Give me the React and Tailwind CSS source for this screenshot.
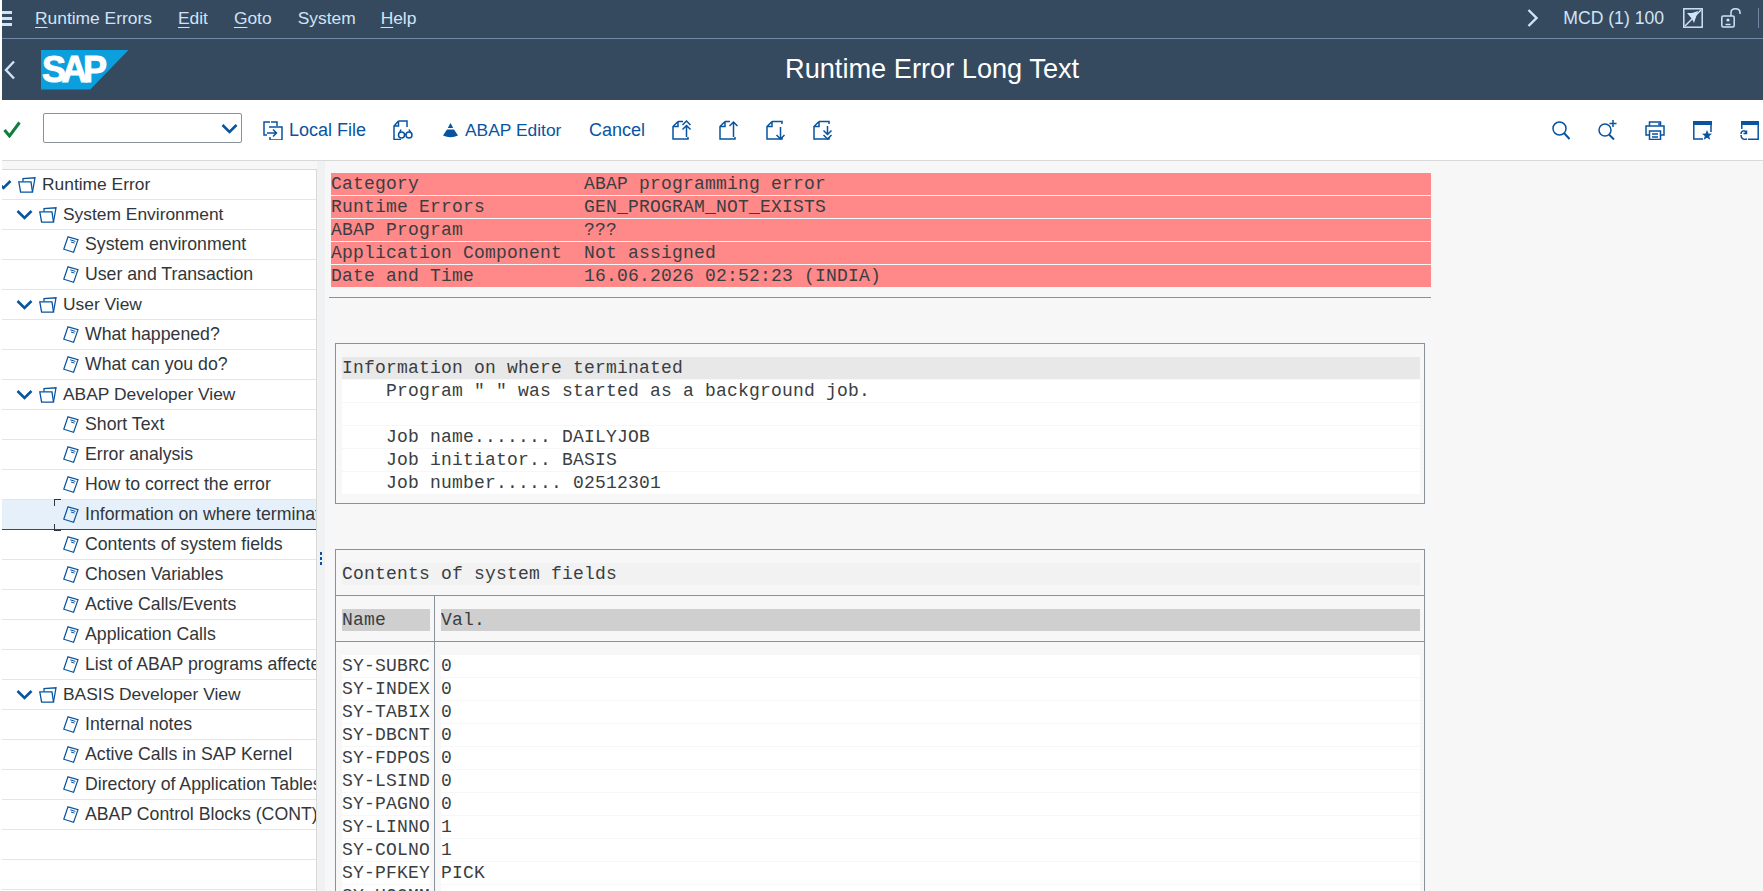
const treeRows = [
  { label: 'Runtime Error', level: 0 },
  { label: 'System Environment', level: 1 },
  { label: 'System environment', level: 2 },
  { label: 'User and Transaction', level: 2 },
  { label: 'User View', level: 1 },
  { label: 'What happened?', level: 2 },
  { label: 'What can you do?', level: 2 },
  { label: 'ABAP Developer View', level: 1 },
  { label: 'Short Text', level: 2 },
  { label: 'Error analysis', level: 2 },
  { label: 'How to correct the error', level: 2 },
  { label: 'Information on where terminated', level: 2, selected: true },
  { label: 'Contents of system fields', level: 2 },
  { label: 'Chosen Variables', level: 2 },
  { label: 'Active Calls/Events', level: 2 },
  { label: 'Application Calls', level: 2 },
  { label: 'List of ABAP programs affected', level: 2 },
  { label: 'BASIS Developer View', level: 1 },
  { label: 'Internal notes', level: 2 },
  { label: 'Active Calls in SAP Kernel', level: 2 },
  { label: 'Directory of Application Tables', level: 2 },
  { label: 'ABAP Control Blocks (CONT)', level: 2 },
];

const errorRows = [
  ['Category', 'ABAP programming error'],
  ['Runtime Errors', 'GEN_PROGRAM_NOT_EXISTS'],
  ['ABAP Program', '???'],
  ['Application Component', 'Not assigned'],
  ['Date and Time', '16.06.2026 02:52:23 (INDIA)'],
];

const infoRows = [
  '    Program " " was started as a background job.',
  '',
  '    Job name....... DAILYJOB',
  '    Job initiator.. BASIS',
  '    Job number...... 02512301',
];

const sysFields = [
  ['SY-SUBRC', '0'],
  ['SY-INDEX', '0'],
  ['SY-TABIX', '0'],
  ['SY-DBCNT', '0'],
  ['SY-FDPOS', '0'],
  ['SY-LSIND', '0'],
  ['SY-PAGNO', '0'],
  ['SY-LINNO', '1'],
  ['SY-COLNO', '1'],
  ['SY-PFKEY', 'PICK'],
  ['SY-UCOMM', ''],
];

const Icon = ({ w = 20, h = 20, color = '#0854a0', sw = 1.5, className = '', children }) => (
  <svg
    width={w}
    height={h}
    viewBox={`0 0 ${w} ${h}`}
    fill="none"
    stroke={color}
    strokeWidth={sw}
    className={`shrink-0 ${className}`}
  >
    {children}
  </svg>
);

const Chevron = ({ className = '' }) => (
  <Icon w={17} h={11} sw={2.6} className={className}>
    <path d="M1.5 2 L8.5 9 L15.5 2" />
  </Icon>
);

const FolderIcon = ({ className = '' }) => (
  <Icon w={18} h={16} sw={1.3} className={className}>
    <path d="M5 4.5 V1.5 L17 .8 L14.5 15" />
    <path d="M.8 4.8 H13 L14.5 15.2 H2.6 Z" />
  </Icon>
);

const LeafIcon = ({ className = '' }) => (
  <Icon w={16} h={17} sw={1.2} className={className}>
    <path d="M5 .8 L15 3.6 L10.6 16.2 L.8 13.2 Z" />
    <path d="M7.2 3.8 L12.4 5.4 M8 6 L11.6 7.1" strokeWidth="1" />
  </Icon>
);

const PageIcon = ({ children }) => (
  <Icon w={21} h={20}>
    <path d="M6 1.5 H11 M6 1.5 L1 6.5 V19 H16 V17 M1 6.5 H6 V1.5" />
    {children}
  </Icon>
);

const Mono = 'font-["Liberation_Mono",monospace] text-[18px] tracking-[0.2px] leading-[22px] whitespace-pre text-[#3a3e42]';

const TreeRow = ({ row }) => {
  const base = 'relative flex items-center h-[30px] border-b';
  const tone = row.selected ? 'bg-[#e5f0fa] border-[#0854a0]' : 'border-[#e5e5e5]';
  return (
    <div className={`${base} ${tone}`}>
      {row.level === 0 && (
        <>
          <Chevron className="-ml-[7px]" />
          <FolderIcon className="ml-[6px]" />
          <span className="ml-[6px]">{row.label}</span>
        </>
      )}
      {row.level === 1 && (
        <>
          <Chevron className="ml-[14px]" />
          <FolderIcon className="ml-[6px]" />
          <span className="ml-[6px]">{row.label}</span>
        </>
      )}
      {row.level === 2 && (
        <>
          <LeafIcon className="ml-[61px]" />
          <span className="ml-[6px] text-[17.7px]">{row.label}</span>
        </>
      )}
      {row.selected && (
        <>
          <span className="absolute left-[52px] -top-px w-[7px] h-[7px] border-l border-t border-[#32363a]" />
          <span className="absolute left-[52px] -bottom-[2px] w-[7px] h-[7px] border-l border-b border-[#32363a]" />
        </>
      )}
    </div>
  );
};

const MenuBar = () => (
  <div className="flex items-center h-[39px] pb-[2px] border-b border-[#6f89a5] text-[#d1e3f5]">
    <div className="flex flex-col gap-[3px] w-[10px]">
      <span className="h-[3px] bg-[#d1e3f5]" />
      <span className="h-[3px] bg-[#d1e3f5]" />
      <span className="h-[3px] bg-[#d1e3f5]" />
    </div>
    <nav className="flex gap-[26px] ml-[23px]">
      <span><span className="underline underline-offset-[3px]">R</span>untime Errors</span>
      <span><span className="underline underline-offset-[3px]">E</span>dit</span>
      <span><span className="underline underline-offset-[3px]">G</span>oto</span>
      <span>System</span>
      <span className="-ml-px"><span className="underline underline-offset-[3px]">H</span>elp</span>
    </nav>
    <div className="flex items-center ml-auto">
      <Icon w={11} h={18} color="#d1e3f5" sw={2.4}>
        <path d="M1.5 1 L9.5 9 L1.5 17" />
      </Icon>
      <span className="ml-[25px] text-[17.6px]">MCD (1) 100</span>
      <Icon w={20} h={20} color="#d1e3f5" className="ml-[19px]">
        <rect x=".8" y=".8" width="18.4" height="18.4" />
        <path d="M2 18 L18 2" />
        <path d="M4 5 H9 L15 3 L11 15 L9 11 Z" fill="#d1e3f5" stroke="none" />
      </Icon>
      <Icon w={20} h={20} color="#d1e3f5" className="ml-[18px]">
        <rect x=".8" y="8" width="12.4" height="11" rx="1.5" />
        <path d="M10 8 V4.5 C10 -.5 19 -.5 19 4.5 V6" />
        <circle cx="7" cy="12" r="1.6" fill="#d1e3f5" stroke="none" />
        <path d="M4.5 16.5 H9.5" />
      </Icon>
      <span className="ml-[17px] mr-[4px] w-px h-[20px] bg-[#6f89a5]" />
    </div>
  </div>
);

const TitleBar = () => (
  <div className="flex items-center h-[61px] text-white">
    <Icon w={12} h={20} color="#d1e3f5" sw={2.4} className="ml-[2px]">
      <path d="M10 1.5 L2 10 L10 18.5" />
    </Icon>
    <div className="ml-[25px] w-[88px] h-[40px] bg-[#0b9fdd] [clip-path:polygon(0_0,100%_0,56%_100%,0_100%)] overflow-hidden pl-[1px]">
      <span className="block font-['Liberation_Sans',sans-serif] font-bold text-[36px] leading-[40px] tracking-[-4.5px] [-webkit-text-stroke:1px_white]">SAP</span>
    </div>
    <h1 className="ml-[656px] text-[27.2px] font-normal whitespace-nowrap">Runtime Error Long Text</h1>
  </div>
);

const Toolbar = () => (
  <div className="flex items-center h-[61px] bg-white border-b border-[#d9d9d9] text-[#0854a0]">
    <Icon w={18} h={17} color="#107e3e" sw={3} className="ml-[1px] mb-[2px]">
      <path d="M1.5 9 L6.5 15 L16.5 1.5" />
    </Icon>
    <div className="flex items-center justify-end ml-[22px] mb-[4px] w-[199px] h-[30px] bg-white border border-[#89919a] rounded-[2px] pr-[3px]">
      <Chevron />
    </div>
    <Icon w={20} h={19} className="ml-[21px]">
      <path d="M7 1 H1 V14 H4" />
      <path d="M8 1 H14 V5 M6 6 H19 V19 H7 V16" />
      <path d="M4 12 H13 M10 8.5 L13.5 12 L10 15.5" />
    </Icon>
    <span className="ml-[6px] w-[77px] text-[18px] whitespace-nowrap">Local File</span>
    <Icon w={20} h={20} className="ml-[27px]">
      <path d="M5.5 1 H14 V7 M5.5 1 L1 6 V19.5 H8 M1 6 H5.5 V1" />
      <circle cx="8.5" cy="15" r="3" />
      <circle cx="16" cy="15" r="3" />
      <path d="M8 9.5 L6.5 13 M16 9.5 L18 13 M11.5 14.5 H13" />
    </Icon>
    <Icon w={15} h={16} color="#0854a0" sw={0} className="ml-[30px]">
      <path d="M7.5 1 L10.2 6 H4.8 Z M4 7.4 H11 L15 13.6 Q7.5 17 0 13.6 Z" fill="#0854a0" />
    </Icon>
    <span className="ml-[7px] w-[97px] whitespace-nowrap">ABAP Editor</span>
    <span className="ml-[27px] w-[56px] text-[18px]">Cancel</span>
    <span className="ml-[27px]">
      <PageIcon>
        <path d="M14.5 17 V6 M10.5 9.5 L14.5 5.5 L18.5 9.5 M10.5 5 L14.5 1 L18.5 5" />
      </PageIcon>
    </span>
    <span className="ml-[26px]">
      <PageIcon>
        <path d="M14.5 17 V2 M10.5 6 L14.5 2 L18.5 6" />
      </PageIcon>
    </span>
    <span className="ml-[26px]">
      <PageIcon>
        <path d="M14.5 7 V19 M10.5 15 L14.5 19 L18.5 15 M11 1.5 H16 V4" />
      </PageIcon>
    </span>
    <span className="ml-[26px]">
      <PageIcon>
        <path d="M14.5 6 V14 M10.5 10.5 L14.5 14.5 L18.5 10.5 M10.5 15 L14.5 19 L18.5 15 M11 1.5 H16 V4" />
      </PageIcon>
    </span>
    <div className="flex items-center gap-[28px] ml-auto mr-[4px]">
      <Icon w={18} h={19}>
        <circle cx="7.5" cy="7.5" r="6.5" />
        <path d="M12 12 L17.5 18" strokeWidth="2" />
      </Icon>
      <Icon w={19} h={20}>
        <circle cx="7" cy="10" r="6" />
        <path d="M11 14.5 L16 19.5" strokeWidth="2" />
        <path d="M15 0 V7 M11.5 3.5 H18.5" />
      </Icon>
      <Icon w={20} h={19}>
        <path d="M4.5 5 V1 H15.5 V5 M4 14 H1 V5 H19 V14 H16" />
        <path d="M4.5 10 H15.5 V18.5 H4.5 Z M7 13 H13 M7 16 H13 M13 3 H15" />
      </Icon>
      <Icon w={19} h={19}>
        <path d="M.8 3 V18 H10 M18 3 V11" />
        <rect x="0" y="0" width="19" height="4" fill="#0854a0" stroke="none" />
        <path d="M14 9 L15.4 12.6 L19 12.8 L16.2 15.1 L17.2 18.8 L14 16.7 L10.8 18.8 L11.8 15.1 L9 12.8 L12.6 12.6 Z" fill="#0854a0" stroke="none" />
      </Icon>
      <Icon w={19} h={19}>
        <path d="M1.8 3 V8 M18.2 3 V18.2 H8" />
        <rect x="1" y="0" width="18" height="4" fill="#0854a0" stroke="none" />
        <path d="M1 13 C1 9 6 9 6 12 M6.5 9.5 V12.5 H3.5 M1 14 C1 18 4 19 7 18" />
      </Icon>
    </div>
  </div>
);

const Tree = () => (
  <aside className="relative w-[315px] shrink-0 mt-[8px] bg-white border-t border-r border-[#d9d9d9] overflow-hidden whitespace-nowrap text-[#32363a]">
    {treeRows.map((row) => (
      <TreeRow key={row.label} row={row} />
    ))}
    <div className="h-[30px] border-b border-[#e5e5e5]" />
    <div className="h-[30px] border-b border-[#e5e5e5]" />
  </aside>
);

const Sash = () => (
  <div className="w-[8px] shrink-0 bg-[#eff1f2] pt-[391px] pl-[3px]">
    <div className="flex flex-col gap-[2px]">
      <span className="w-[2px] h-[3px] bg-[#0854a0]" />
      <span className="w-[2px] h-[3px] bg-[#0854a0]" />
      <span className="w-[2px] h-[3px] bg-[#0854a0]" />
    </div>
  </div>
);

const Content = () => (
  <main className="flex-1 bg-[#f7f7f7] pt-[12px]">
    <div className={`ml-[6px] w-[1100px] flex flex-col gap-px ${Mono}`}>
      {errorRows.map(([name, value]) => (
        <div key={name} className="h-[22px] bg-[#ff8888]">
          {name.padEnd(23, ' ') + value}
        </div>
      ))}
    </div>
    <div className="ml-[4px] mt-[10px] w-[1102px] h-px bg-[#89919a]" />

    <section className={`ml-[10px] mt-[45px] w-[1090px] h-[161px] border border-[#89919a] pt-[13px] pl-[6px] pr-[4px] ${Mono}`}>
      <div className="h-[22px] mb-px bg-[#e8e8e8]">Information on where terminated</div>
      {infoRows.map((line, i) => (
        <div key={i} className="h-[22px] mb-px bg-white">{line}</div>
      ))}
    </section>

    <section className={`ml-[10px] mt-[45px] w-[1090px] border border-b-0 border-[#89919a] ${Mono}`}>
      <div className="pt-[13px] pb-[10px] pl-[6px] pr-[4px] border-b border-[#89919a]">
        <div className="h-[22px] bg-[#f2f2f2]">Contents of system fields</div>
      </div>
      <div className="flex border-b border-[#89919a]">
        <div className="w-[99px] shrink-0 pt-[13px] pb-[10px] pl-[6px] pr-[4px] border-r border-[#89919a]">
          <div className="h-[22px] bg-[#cfcfcf]">Name</div>
        </div>
        <div className="flex-1 pt-[13px] pb-[10px] pl-[6px] pr-[4px]">
          <div className="h-[22px] bg-[#cfcfcf]">Val.</div>
        </div>
      </div>
      <div className="flex">
        <div className="w-[99px] shrink-0 pt-[13px] pl-[6px] pr-[4px] border-r border-[#89919a]">
          {sysFields.map(([name]) => (
            <div key={name} className="h-[22px] mb-px bg-white">{name}</div>
          ))}
        </div>
        <div className="flex-1 pt-[13px] pl-[6px] pr-[4px]">
          {sysFields.map(([name, value]) => (
            <div key={name} className="h-[22px] mb-px bg-white">{value}</div>
          ))}
        </div>
      </div>
    </section>
  </main>
);

export default function App() {
  return (
    <div className="w-[1763px] h-[891px] overflow-hidden bg-white pl-[2px] font-['Liberation_Sans',sans-serif] text-[17.4px]">
      <header className="bg-[#354a5f]">
        <MenuBar />
        <TitleBar />
      </header>
      <Toolbar />
      <div className="flex h-[730px] bg-[#f7f7f7]">
        <Tree />
        <Sash />
        <Content />
      </div>
    </div>
  );
}
